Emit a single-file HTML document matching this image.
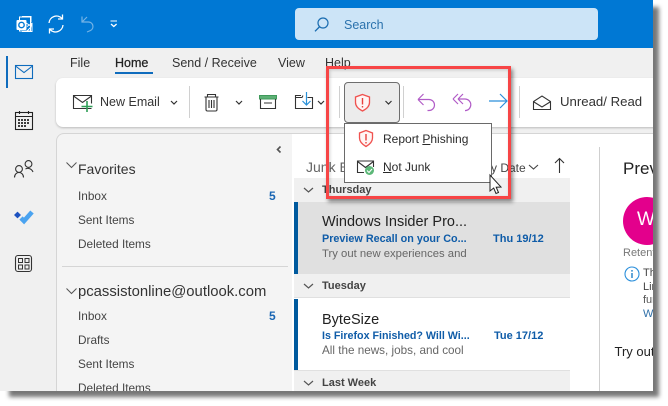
<!DOCTYPE html>
<html><head><meta charset="utf-8">
<style>
html,body{margin:0;padding:0;background:#fff;}
#r{position:relative;width:668px;height:406px;overflow:hidden;background:#fff;font-family:"Liberation Sans",sans-serif;}
.t{position:absolute;white-space:nowrap;line-height:16px;color:#333;}
.b{position:absolute;}
svg{position:absolute;overflow:visible;}
u{text-underline-offset:1px;}
</style></head><body>
<div id="r">
<!-- window shadow -->
<div class="b" style="left:9px;top:7px;width:650px;height:390px;background:#777;filter:blur(2px)"></div>
<div id="w" class="b" style="left:0;top:0;width:653px;height:391px;background:#f0f0f0;overflow:hidden">
  <div class="b" style="left:0;top:0;width:653px;height:48px;background:#0078d4"></div>
  <div class="b" style="left:295px;top:8px;width:303px;height:32px;background:#cce4f7;border-radius:4px"></div>
  <svg style="left:0;top:0" width="653" height="48" fill="none">
    <rect x="19.500" y="17" width="11" height="14" fill="none" stroke="#fff" stroke-width="1"/>
    <path d="M22 16.500h9v6M22 31.500h10v-8l-5 3" stroke="#fff" fill="none"/>
    <rect x="16.500" y="20" width="10" height="10" fill="#fff" rx="1"/>
    <circle cx="21.500" cy="25" r="2.700" fill="none" stroke="#0078d4" stroke-width="1.400"/>
    <path d="M26 23l5 3 0-3M27 31l4-4" stroke="#fff" stroke-width="1"/>
    <path d="M49 23a7.500 7.500 0 0 1 13-4.500M63 25a7.500 7.500 0 0 1-13 4.500" stroke="#fff" stroke-width="1.300"/>
    <path d="M62.500 14.500v4.500h-4.500M49.500 33.500v-4.500h4.500" stroke="#fff" stroke-width="1.300"/>
    <path d="M82 16.500v5.500h6.500a4.500 4.500 0 0 1 2 8.500l-3.500 1.500M82 22l5-5" stroke="#74b3e6" stroke-width="1.200"/>
    <path d="M110.500 21h6.500" stroke="#fff" stroke-width="1"/>
    <path d="M111 24l2.800 2.500 2.800-2.500" stroke="#fff" stroke-width="1.300"/>
    <circle cx="323" cy="23" r="5" stroke="#1a6cb0" stroke-width="1.200"/>
    <path d="M319.300 27l-4.300 4.300" stroke="#1a6cb0" stroke-width="1.300"/>
  </svg>
  <div class="t" style="left:344px;top:17px;font-size:12.500px;color:#2b72ad">Search</div>

  <!-- sidebar -->
  <div class="b" style="left:6px;top:56px;width:2px;height:32px;background:#0f6cbd"></div>
  <svg style="left:0;top:48px" width="56" height="343" fill="none">
    <rect x="15.500" y="17.500" width="17" height="13" stroke="#0f6cbd" stroke-width="1.100"/>
    <path d="M15.500 18l8.500 6.500 8.500-6.500" stroke="#0f6cbd" stroke-width="1.100"/>
    <rect x="15.500" y="64.500" width="17" height="17" stroke="#222" stroke-width="1.100"/>
    <path d="M15.500 68.500h17M19.500 63v3M28.500 63v3" stroke="#222" stroke-width="1.100"/>
    <path d="M18 72h12M18 75h12M18 78h9" stroke="#222" stroke-width="1.700" stroke-dasharray="2 1"/>
    <circle cx="19" cy="121" r="3.400" stroke="#333" stroke-width="1.100"/>
    <path d="M14.500 129.500c0-3 2-5 4.500-5s4.500 2 4.500 5" stroke="#333" stroke-width="1.100"/>
    <circle cx="28.500" cy="116" r="3.400" stroke="#333" stroke-width="1.100"/>
    <path d="M25.500 121c2-1.200 6-.8 7.500 3" stroke="#333" stroke-width="1.100"/>
    <path d="M21 170l3 3 8-9" stroke="#4aa3f0" stroke-width="4.600"/>
    <path d="M14 167l3.500-3.400 3.500 3.400-3.500 3.400z" fill="#1d52c0"/>
    <rect x="15.500" y="207.500" width="16" height="16" rx="2.500" stroke="#333" stroke-width="1.100"/>
    <rect x="18.500" y="210.500" width="4" height="4" stroke="#333"/>
    <rect x="25" y="210.500" width="4" height="4" stroke="#333"/>
    <rect x="18.500" y="217" width="4" height="4" stroke="#333"/>
    <rect x="25" y="217" width="4" height="4" stroke="#333"/>
  </svg>

  <!-- tabs -->
  <div class="t" style="left:70px;top:55px;font-size:12.500px">File</div>
  <div class="t" style="left:115px;top:55px;font-size:12.500px;color:#222;font-weight:400;-webkit-text-stroke:.25px #222">Home</div>
  <div class="b" style="left:115px;top:72px;width:38px;height:2px;background:#0f6cbd"></div>
  <div class="t" style="left:172px;top:55px;font-size:12.500px">Send / Receive</div>
  <div class="t" style="left:278px;top:55px;font-size:12.500px">View</div>
  <div class="t" style="left:325px;top:55px;font-size:12.500px">Help</div>

  <!-- ribbon -->
  <div class="b" style="left:56px;top:78px;width:620px;height:49px;background:#fff;border-radius:7px;box-shadow:0 1px 2px #bbb"></div>
  <div class="t" style="left:100px;top:94px;font-size:12.500px;color:#333">New Email</div>
  <div class="t" style="left:560px;top:94px;font-size:13.200px;color:#333">Unread/ Read</div>
  <div class="b" style="left:189px;top:86px;width:1px;height:32px;background:#d0d0d0"></div>
  <div class="b" style="left:339px;top:86px;width:1px;height:32px;background:#d0d0d0"></div>
  <div class="b" style="left:403px;top:86px;width:1px;height:32px;background:#d0d0d0"></div>
  <div class="b" style="left:519px;top:86px;width:1px;height:32px;background:#d0d0d0"></div>
  <div class="b" style="left:344px;top:82px;width:56px;height:41px;box-sizing:border-box;background:#ececec;border:1px solid #6e6e6e;border-radius:4px"></div>
  <svg style="left:0;top:0" width="653" height="135" fill="none">
    <path d="M91.500 108.500h-18v-13h18v8M73.500 96l9 6.500 9-6.500" stroke="#333" stroke-width="1.100"/>
    <path d="M87 101v11M81.500 106.500h11" stroke="#2f9e57" stroke-width="1.600"/>
    <path d="M171 101l3 3 3-3M236 101l3 3 3-3M318 101l3 3 3-3M385.500 101l3 3 3-3" stroke="#333" stroke-width="1.200"/>
    <path d="M204.500 97h14M207.500 97v-2.500h8v2.500M206 97.500v12a1.500 1.500 0 0 0 1.500 1.500h8a1.500 1.500 0 0 0 1.500-1.500v-12M209 100v8M211.500 100v8M214 100v8" stroke="#333" stroke-width="1.100"/>
    <rect x="259.500" y="95.500" width="17" height="3.500" fill="#5db075" stroke="#3f9a5b"/>
    <path d="M260.500 99v9.500h15v-9.500M264 103h8" stroke="#333" stroke-width="1.100"/>
    <path d="M301 95.500h-5.500v13h17v-11h-5" stroke="#333" stroke-width="1.100"/>
    <path d="M295.500 97.500h6.500l1-2" stroke="#333"/>
    <path d="M306.500 92v12.500M302.500 101l4 4 4-4" stroke="#2890d8" stroke-width="1.200"/>
    <path d="M362.500 94.500l7 2.500v5.500c0 4-3 6.500-7 8.500-4-2-7-4.500-7-8.500v-5.500z" stroke="#f0524f" stroke-width="1.300" fill="#fff5f4"/>
    <path d="M362.500 98v6.500M362.500 106v1.500" stroke="#e8403d" stroke-width="1.400"/>
    <path d="M418 99.500l5.500-5.500M418 99.500l5.500 5.500M418 99.500h11a5.500 5.500 0 0 1 0 11h-1.500" stroke="#b15cc7" stroke-width="1.200"/>
    <path d="M453 99l5-5M453 99l5 5M458 99l5-5M458 99l5 5M458 99h7a5.800 5.800 0 0 1 0 11.600" stroke="#b15cc7" stroke-width="1.200"/>
    <path d="M489 101h18M500 94l7 7-7 7" stroke="#2b8fdb" stroke-width="1.200"/>
    <path d="M533.500 101.500v8h17v-8l-8.500-5.500zM534 102l8 5 8-5" stroke="#333" stroke-width="1.100"/>
  </svg>

  <!-- folder pane -->
  <div class="b" style="left:56px;top:133px;width:236px;height:270px;box-sizing:border-box;background:#f4f4f4;border-left:1px solid #d5d5d5;border-top:1px solid #d5d5d5;border-top-left-radius:8px"></div>
  <svg style="left:0;top:130px" width="292" height="261" fill="none">
    <path d="M280.500 16.500l-3 3 3 3" stroke="#555" stroke-width="1.600"/>
    <path d="M66.500 32.500l5 5 5-5" stroke="#555" stroke-width="1"/>
    <path d="M66.500 158.500l5 5 5-5" stroke="#555" stroke-width="1"/>
  </svg>
  <div class="t" style="left:78px;top:161px;font-size:14px;color:#333">Favorites</div>
  <div class="t" style="left:78px;top:188px;font-size:11.800px;color:#444">Inbox</div>
  <div class="t" style="left:269px;top:188px;font-size:12px;color:#1a66b3;font-weight:bold">5</div>
  <div class="t" style="left:78px;top:212px;font-size:11.800px;color:#444">Sent Items</div>
  <div class="t" style="left:78px;top:236px;font-size:11.800px;color:#444">Deleted Items</div>
  <div class="b" style="left:62px;top:266px;width:226px;height:1px;background:#d5d5d5"></div>
  <div class="t" style="left:78px;top:284px;font-size:14.850px;color:#333">pcassistonline@outlook.com</div>
  <div class="t" style="left:78px;top:308px;font-size:11.800px;color:#444">Inbox</div>
  <div class="t" style="left:269px;top:308px;font-size:12px;color:#1a66b3;font-weight:bold">5</div>
  <div class="t" style="left:78px;top:332px;font-size:11.800px;color:#444">Drafts</div>
  <div class="t" style="left:78px;top:356px;font-size:11.800px;color:#444">Sent Items</div>
  <div class="t" style="left:78px;top:380px;font-size:11.800px;color:#444">Deleted Items</div>

  <!-- message list + reading pane -->
  <div class="b" style="left:292px;top:133px;width:361px;height:258px;background:#fff;border-top:1px solid #d5d5d5"></div>
  <div class="b" style="left:599px;top:147px;width:1px;height:244px;background:#cfcfcf"></div>
  <div class="t" style="left:306px;top:159px;font-size:14px;color:#666">Junk Email</div>
  <div class="t" style="left:483px;top:160px;font-size:12px;color:#444">By Date</div>
  <div class="b" style="left:294px;top:178px;width:276px;height:24px;background:#f0f0f0"></div>
  <div class="t" style="left:322px;top:182px;font-size:11px;color:#444;font-weight:bold">Thursday</div>
  <div class="b" style="left:294px;top:202px;width:276px;height:72px;background:#e0e0e0"></div>
  <div class="b" style="left:294px;top:202px;width:4px;height:72px;background:#005a9e"></div>
  <div class="t" style="left:322px;top:214px;font-size:14.500px;color:#222">Windows Insider Pro...</div>
  <div class="t" style="left:322px;top:231px;font-size:10.800px;color:#0f5ca8;font-weight:bold">Preview Recall on your Co...</div>
  <div class="t" style="left:493px;top:231px;font-size:11px;color:#0f5ca8;font-weight:bold">Thu 19/12</div>
  <div class="t" style="left:322px;top:246px;font-size:11.300px;color:#666">Try out new experiences and</div>
  <div class="b" style="left:294px;top:274px;width:276px;height:24px;box-sizing:border-box;background:#f0f0f0;border-bottom:1px solid #e0e0e0"></div>
  <div class="t" style="left:322px;top:278px;font-size:11px;color:#444;font-weight:bold">Tuesday</div>
  <div class="b" style="left:294px;top:299px;width:4px;height:71px;background:#005a9e"></div>
  <div class="t" style="left:322px;top:312px;font-size:14.500px;color:#222">ByteSize</div>
  <div class="t" style="left:322px;top:328px;font-size:10.700px;color:#0f5ca8;font-weight:bold">Is Firefox Finished? Will Wi...</div>
  <div class="t" style="left:494px;top:328px;font-size:11px;color:#0f5ca8;font-weight:bold">Tue 17/12</div>
  <div class="t" style="left:322px;top:343px;font-size:11.700px;color:#666">All the news, jobs, and cool</div>
  <div class="b" style="left:294px;top:370px;width:276px;height:21px;background:#f0f0f0;border-top:1px solid #e0e0e0"></div>
  <div class="t" style="left:322px;top:375px;font-size:11px;color:#444;font-weight:bold">Last Week</div>
  <svg style="left:0;top:150px" width="653" height="241" fill="none">
    <path d="M529 15l4.500 4 4.500-4" stroke="#444" stroke-width="1.100"/>
    <path d="M559.500 23v-14M555 13l4.500-4.500 4.500 4.500" stroke="#333" stroke-width="1.100"/>
    <path d="M304 38l4.500 4 4.500-4M304 134l4.500 4 4.500-4M304 231l4.500 4 4.500-4" stroke="#555" stroke-width="1.200"/>
  </svg>

  <!-- reading pane -->
  <div class="t" style="left:623px;top:161px;font-size:17px;color:#222">Preview</div>
  <div class="b" style="left:623px;top:197px;width:48px;height:48px;border-radius:50%;background:#e3008c"></div>
  <div class="t" style="left:637px;top:212px;font-size:19px;color:#fff">W</div>
  <div class="t" style="left:623px;top:245px;font-size:11px;color:#777">Retention</div>
  <svg style="left:623.500px;top:265.500px" width="16" height="16" fill="none">
    <circle cx="8" cy="8" r="7" stroke="#2b8fdb" stroke-width="1.100"/>
    <path d="M8 7v5M8 4v1.600" stroke="#1f7fc8" stroke-width="1.400"/>
  </svg>
  <div class="t" style="left:643px;top:265px;font-size:11px;color:#444">This</div>
  <div class="t" style="left:643px;top:279px;font-size:11px;color:#444">Link</div>
  <div class="t" style="left:643px;top:292px;font-size:11px;color:#555">fun</div>
  <div class="t" style="left:643px;top:306px;font-size:11px;color:#2f6fa8">Wi</div>
  <div class="t" style="left:614.500px;top:344px;font-size:13px;color:#222">Try out</div>
</div>

<!-- red highlight -->
<div class="b" style="left:326px;top:66px;width:185px;height:132.500px;box-sizing:border-box;border:3.500px solid #f74546;box-shadow:2px 3px 4px rgba(0,0,0,.45),inset 1px 1px 3px rgba(0,0,0,.18)"></div>

<!-- dropdown -->
<div class="b" style="left:344px;top:123px;width:148px;height:60px;box-sizing:border-box;background:#fff;border:1px solid #6a6a6a"></div>
<div class="t" style="left:383px;top:131px;font-size:12px;color:#2a2a2a">Report <u>P</u>hishing</div>
<div class="t" style="left:383px;top:159px;font-size:12px;color:#2a2a2a"><u>N</u>ot Junk</div>
<svg style="left:0;top:0" width="668" height="406" fill="none">
  <path d="M366 130.500l6.500 2.500v5c0 4-3 6.500-6.500 8.500-3.500-2-6.500-4.500-6.500-8.500v-5z" stroke="#f0524f" stroke-width="1.300" fill="#fff5f4"/>
  <path d="M366 134v6.500M366 142v1.500" stroke="#e8403d" stroke-width="1.400"/>
  <path d="M364 172.500h-6.500v-11.500h16v6M357.500 161.500l8 6 8-6" stroke="#333" stroke-width="1.100"/>
  <circle cx="369.500" cy="170.500" r="4.500" fill="#5cb878"/>
  <path d="M367 170.500l2 2 3-3.500" stroke="#fff" stroke-width="1.100"/>
  <path d="M490 175v16l3.700-3 2.300 5.500 2.500-1-2.300-5.300 4.800-.2z" fill="#fff" stroke="#222" stroke-width="1"/>
</svg>
</div>
</body></html>
